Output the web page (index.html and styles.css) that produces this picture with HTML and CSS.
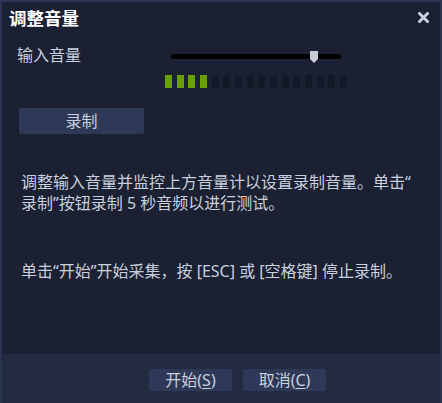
FILE: index.html
```html
<!DOCTYPE html>
<html lang="zh-CN">
<head>
    <meta charset="UTF-8">
    <meta name="viewport" content="width=device-width, initial-scale=1.0">
    <title>调整音量</title>
    <link rel="stylesheet" href="styles.css">
</head>
<body>
    <div class="window">
        <div class="titlebar">
            <h1>调整音量</h1>
            <span class="close">
                <svg width="11" height="11" viewBox="0 0 11 11">
                    <path d="M1.5 1.5 L9.5 9.5 M9.5 1.5 L1.5 9.5" stroke="#c9cedb" stroke-width="3" stroke-linecap="square"/>
                </svg>
            </span>
        </div>

        <div class="content">
            <div class="volume">
                <span class="label">输入音量</span>
                <div class="controls">
                    <div class="slider">
                        <div class="track"></div>
                        <svg class="thumb" width="8" height="12" viewBox="0 0 8 12">
                            <path d="M0 0 H8 V8 L4 12 L0 8 Z" fill="#c7ccd9"/>
                        </svg>
                    </div>
                    <div class="meter">
                        <span class="bar on"></span>
                        <span class="bar on"></span>
                        <span class="bar on"></span>
                        <span class="bar on"></span>
                        <span class="bar"></span>
                        <span class="bar"></span>
                        <span class="bar"></span>
                        <span class="bar"></span>
                        <span class="bar"></span>
                        <span class="bar"></span>
                        <span class="bar"></span>
                        <span class="bar"></span>
                        <span class="bar"></span>
                        <span class="bar"></span>
                        <span class="bar"></span>
                        <span class="bar"></span>
                    </div>
                </div>
            </div>

            <button class="btn record">录制</button>

            <p class="hint">调整输入音量并监控上方音量计以设置录制音量。单击“<br>录制”按钮录制 5 秒音频以进行测试。</p>
            <p class="hint second">单击“开始”开始采集，按 [ESC] 或 [空格键] 停止录制。</p>
        </div>

        <div class="footer">
            <button class="btn">开始(<u>S</u>)</button>
            <button class="btn">取消(<u>C</u>)</button>
        </div>
    </div>
</body>
</html>
```

FILE: styles.css
```css
* {
    box-sizing: border-box;
}
body {
    margin: 0;
    background-color: #1b2132;
    font-family: "Noto Sans", "Noto Sans CJK SC", sans-serif;
    font-size: 16px;
    color: #c9d0df;
}
.window {
    height: 403px;
    display: flex;
    flex-direction: column;
    border: 2px solid #2b3451;
    border-bottom: none;
    background-color: #1b2132;
}
.titlebar {
    height: 32px;
    display: flex;
    align-items: center;
    justify-content: space-between;
    padding: 0 11px 0 7px;
}
.titlebar h1 {
    margin: 0;
    font-size: 17.5px;
    font-weight: bold;
    color: #ffffff;
    line-height: 22px;
}
.close {
    display: flex;
    margin-top: -1px;
}
.content {
    flex: 1;
    padding: 10px 15px 0;
}
.volume {
    display: flex;
}
.label {
    width: 148px;
    line-height: 22px;
}
.controls {
    display: flex;
    flex-direction: column;
}
.slider {
    position: relative;
    height: 24px;
    margin-left: 6px;
    display: flex;
    align-items: center;
}
.track {
    width: 170px;
    height: 5px;
    border-radius: 2px;
    background-color: #000000;
}
.thumb {
    position: absolute;
    left: 139px;
    top: 7px;
}
.meter {
    display: flex;
    gap: 4.67px;
    margin-top: 7px;
}
.bar {
    width: 7px;
    height: 13px;
    background-color: #131926;
}
.bar.on {
    background-color: #6aa100;
}
.btn {
    width: 83px;
    height: 22px;
    padding: 0;
    border: none;
    border-radius: 2px;
    background-color: #2e3857;
    color: #c9d0df;
    font-family: inherit;
    font-size: 16px;
    line-height: 22px;
}
.btn u {
    text-underline-offset: 2px;
}
.record {
    width: 125px;
    height: 26px;
    margin: 20px 0 0 2px;
}
.hint {
    margin: 38px 0 0 4px;
    line-height: 21px;
}
.hint.second {
    margin-top: 47px;
}
.footer {
    height: 49px;
    display: flex;
    align-items: center;
    gap: 11px;
    padding: 2px 0 0 147px;
    background-color: #232b41;
}
```
